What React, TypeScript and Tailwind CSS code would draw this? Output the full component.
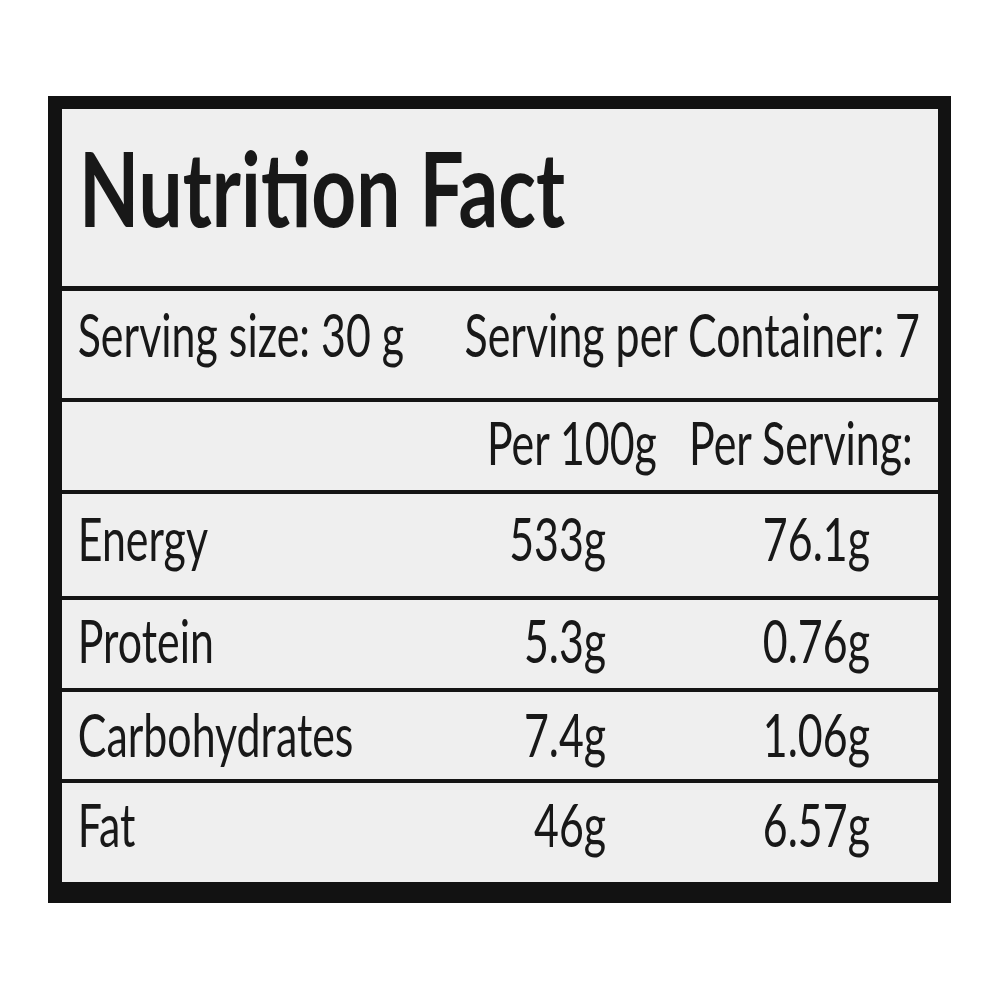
const rows = [
  { name: "Energy", per100: "533g", serving: "76.1g", h: "h-[102px]", pt: "pt-[14px]" },
  { name: "Protein", per100: "5.3g", serving: "0.76g", h: "h-[88px]", pt: "pt-[10px]" },
  { name: "Carbohydrates", per100: "7.4g", serving: "1.06g", h: "h-[87px]", pt: "pt-[12px]" },
  { name: "Fat", per100: "46g", serving: "6.57g", h: "h-[99px]", pt: "pt-[11px]" },
];

function Line({ thick }: { thick?: boolean }) {
  return <div className={thick ? "h-[5px] bg-[#141414]" : "h-[4px] bg-[#141414]"} />;
}

// the label type is tall and narrow, so each row is laid out wide and squeezed
const squeeze = "w-[1225px] origin-left scale-x-[0.715] whitespace-nowrap text-[60px] leading-none";

export default function App() {
  return (
    <div className="min-h-[1000px] w-[1000px] bg-white pl-[48px] pt-[96px] font-['Lato',sans-serif] text-[#181818]">
      <div className="w-[903px] overflow-hidden border-b-[21px] border-l-[14px] border-r-[13px] border-t-[13px] border-[#121212] bg-[#efefef]">
        {/* title */}
        <div className="h-[177px] pl-[17px] pt-[27px]">
          <div className="origin-left scale-x-[0.76] whitespace-nowrap text-[103px] font-bold leading-none">Nutrition Fact</div>
        </div>
        <Line thick />

        {/* serving info */}
        <div className="h-[107px] pt-[13px]">
          <div className={`flex justify-between pl-[22px] pr-[25px] ${squeeze}`}>
            <span>Serving size: 30 g</span>
            <span>Serving per Container: 7</span>
          </div>
        </div>
        <Line />

        {/* column heads */}
        <div className="h-[88px] pt-[10px]">
          <div className={`grid grid-cols-[1fr_auto_358px] pr-[35px] text-right ${squeeze}`}>
            <span />
            <span>Per 100g</span>
            <span>Per Serving:</span>
          </div>
        </div>

        {rows.map((r) => (
          <div key={r.name}>
            <Line />
            <div className={`${r.h} ${r.pt}`}>
              <div className={`grid grid-cols-[1fr_auto_369px] pl-[22px] pr-[95px] ${squeeze}`}>
                <span>{r.name}</span>
                <span className="text-right">{r.per100}</span>
                <span className="text-right">{r.serving}</span>
              </div>
            </div>
          </div>
        ))}
      </div>
    </div>
  );
}
